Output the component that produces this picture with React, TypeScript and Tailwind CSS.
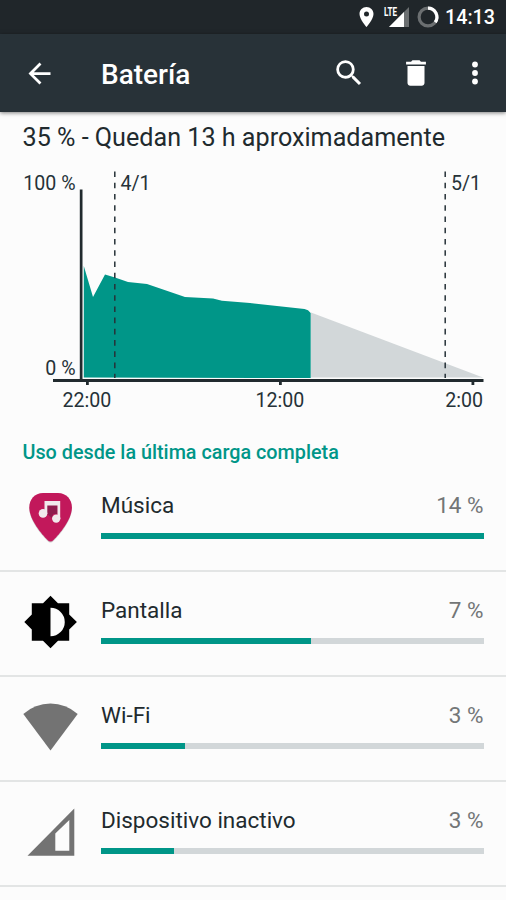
import type { ReactNode } from "react";

function StatusBar() {
  return (
    <div className="flex h-[34px] items-center justify-end bg-[#20262a] pr-[11px] text-white">
      <svg className="h-[34px] w-[86px]" viewBox="356 0 86 34">
        <path
          fillRule="evenodd"
          fill="#fff"
          d="M366.500 7c-3.900 0-7 3.100-7 7 0 5.200 7 13 7 13s7-7.800 7-13c0-3.900-3.100-7-7-7zm0 9.500a2.500 2.500 0 1 1 0-5 2.500 2.500 0 0 1 0 5z"
        />
        <path fill="#6b6f71" d="M409 7v20h-20z" />
        <path fill="#fff" d="M404 12v15h-15z" />
        <path fill="#20262a" d="M383 6h15v8l-4 4h-11z" />
        <text x="384" y="16" fill="#fff" fontSize="12.800" fontWeight="700" textLength="13" lengthAdjust="spacingAndGlyphs">
          LTE
        </text>
        <circle cx="428" cy="17" r="8.900" fill="none" stroke="#6b6f71" strokeWidth="3.200" />
        <path d="M428 8.100a8.900 8.900 0 0 1 7.200 14.130" fill="none" stroke="#fff" strokeWidth="3.200" />
      </svg>
      <span className="ml-[3px] mt-[2px] text-[19.7px] font-medium leading-none">14:13</span>
    </div>
  );
}

function AppBar() {
  return (
    <header className="relative flex h-[78px] items-center bg-[#283238] text-white shadow-[0_1px_4px_rgba(0,0,0,0.5)]">
      <svg className="ml-[23px] h-[33px] w-[33px]" viewBox="0 0 24 24" fill="#fff">
        <path d="M20 11H7.830l5.590-5.590L12 4l-8 8 8 8 1.410-1.410L7.830 13H20v-2z" />
      </svg>
      <h1 className="ml-[45px] mt-[4px] text-[28px] font-medium leading-none">Batería</h1>
      <div className="grow" />
      <svg className="h-[34px] w-[34px]" viewBox="0 0 24 24" fill="#fff">
        <path d="M15.500 14h-.79l-.28-.27A6.471 6.471 0 0 0 16 9.500 6.500 6.500 0 1 0 9.500 16c1.610 0 3.090-.59 4.230-1.570l.27.28v.79l5 4.990L20.490 19l-4.990-5zm-6 0C7.010 14 5 11.990 5 9.500S7.010 5 9.500 5 14 7.010 14 9.500 11.990 14 9.500 14z" />
      </svg>
      <svg className="ml-[33px] h-[34px] w-[34px]" viewBox="0 0 24 24" fill="#fff">
        <path d="M6 19c0 1.100.9 2 2 2h8c1.100 0 2-.9 2-2V7H6v12zM19 4h-3.500l-1-1h-5l-1 1H5v2h14V4z" />
      </svg>
      <svg className="ml-[25px] mr-[14px] h-[34px] w-[34px]" viewBox="0 0 24 24" fill="#fff">
        <circle cx="12" cy="6" r="2.050" />
        <circle cx="12" cy="12" r="2.050" />
        <circle cx="12" cy="18" r="2.050" />
      </svg>
    </header>
  );
}

function Chart() {
  return (
    <svg className="block h-[260px] w-[506px]" viewBox="0 160 506 260" fill="#263238" fontSize="19.600">
      <path
        fill="#009688"
        d="M83.800 377.600V266l9.200 31 12-22.500 10 3 13 4.500 19 2 38 13 28 1.500 9 2.300 28 2.200 54.500 6.100 3.500 1.200 2.700 2.700v65.100z"
      />
      <path fill="#d2d7d9" d="M311 312.500l172 65.100H311z" />
      <path fill="#212a2e" d="M79.800 189.500h2.700V379h401v3H53v-3h26.800z" />
      <path fill="#212a2e" d="M86 381h2.800v4H86zM279 381h2.800v4H279zM471.500 381h2.800v4h-2.800z" />
      <g stroke="#263238" strokeWidth="1.500" strokeDasharray="5.620 5.620">
        <path d="M114.800 171.500V378" />
        <path d="M445.200 171.500V378" />
      </g>
      <text x="75.500" y="189.500" textAnchor="end">100 %</text>
      <text x="75.500" y="375" textAnchor="end">0 %</text>
      <text x="120.500" y="189.500">4/1</text>
      <text x="451" y="189.500">5/1</text>
      <text x="87" y="407" textAnchor="middle">22:00</text>
      <text x="280" y="407" textAnchor="middle">12:00</text>
      <text x="483" y="407" textAnchor="end">2:00</text>
    </svg>
  );
}

function MusicIcon() {
  return (
    <svg className="h-[56px] w-[56px]" viewBox="22 489 56 56">
      <path
        fill="#9e9e9e"
        opacity="0.5"
        transform="translate(0 1)"
        d="M43 493h15c8.500 0 13.900 6.500 13.900 14.500 0 12-12.400 26.500-18.400 32.500-2 2-4 2-6 0-6-6-18.200-20.500-18.200-32.500 0-8 5.200-14.500 13.700-14.500z"
      />
      <path
        fill="#c2185b"
        d="M43 493h15c8.500 0 13.900 6.500 13.900 14.500 0 12-12.400 26.500-18.400 32.500-2 2-4 2-6 0-6-6-18.200-20.500-18.200-32.500 0-8 5.200-14.500 13.700-14.500z"
      />
      <path fill="#8f1b4d" d="M47 505h10.500v9H53l-1 4-5-4z" />
      <path fill="#f1e9ec" d="M44.500 501H60.200v18h-2.700v-13.500H47.300V514h-2.800z" />
      <circle cx="43" cy="513.400" r="4.300" fill="#f1e9ec" />
      <circle cx="56.200" cy="518.600" r="4.200" fill="#f1e9ec" />
    </svg>
  );
}

function DisplayIcon() {
  return (
    <svg className="h-[56px] w-[56px]" viewBox="22 594 56 56">
      <path
        d="M50.500 595.800l7.500 7.500h11.200v11.200l7.700 7.500-7.700 7.500v11.200H58l-7.500 7.500-7.500-7.500H31.800v-11.200l-7.500-7.500 7.500-7.500v-11.200H43z"
        fill="#000"
      />
      <path d="M50.500 607.700a14.300 14.300 0 0 1 0 28.600z" fill="#fcfcfc" />
    </svg>
  );
}

function WifiIcon() {
  return (
    <svg className="h-[56px] w-[56px]" viewBox="22 699 56 56">
      <path d="M50.500 750.500L23.300 714q11.700-10.500 27.200-10.500T77.700 714z" fill="#737373" />
    </svg>
  );
}

function CellIcon() {
  return (
    <svg className="h-[56px] w-[56px]" viewBox="22 804 56 56">
      <path fillRule="evenodd" d="M74.300 808.500v47.200H27.500zM69.300 820L55.300 833.500v17.300h14z" fill="#737373" />
    </svg>
  );
}

interface UsageRowProps {
  icon: ReactNode;
  name: string;
  percent: string;
  fill: number;
}

function UsageRow({ icon, name, percent, fill }: UsageRowProps) {
  return (
    <li className="flex h-[105px] border-b-2 border-[#e3e5e5] pl-[22px] pr-[22.5px]">
      <div className="mt-[22px] shrink-0">{icon}</div>
      <div className="ml-[23px] grow">
        <div className="mt-[25px] flex h-[27px] items-center justify-between text-[22.5px] leading-[27px]">
          <span className="text-[#212a2e]">{name}</span>
          <span className="text-[#737677]">{percent}</span>
        </div>
        <div className="mt-[14px] h-[6px] bg-[#d2d7d9]">
          <div className="h-full bg-[#009688]" style={{ width: fill + "px" }} />
        </div>
      </div>
    </li>
  );
}

export default function App() {
  return (
    <div className="h-[900px] w-[506px] overflow-hidden bg-[#fcfcfc] font-['Roboto',sans-serif]">
      <StatusBar />
      <AppBar />
      <main>
        <h2 className="h-[48px] pl-[22.5px] pt-[11px] text-[25.15px] leading-[30px] text-[#212a2e]">
          35 % - Quedan 13 h aproximadamente
        </h2>
        <Chart />
        <h3 className="h-[47px] pl-[22.5px] pt-[21px] text-[19.8px] font-medium leading-[24px] text-[#009688]">
          Uso desde la última carga completa
        </h3>
        <ul>
          <UsageRow icon={<MusicIcon />} name="Música" percent="14 %" fill={382.5} />
          <UsageRow icon={<DisplayIcon />} name="Pantalla" percent="7 %" fill={210} />
          <UsageRow icon={<WifiIcon />} name="Wi-Fi" percent="3 %" fill={84} />
          <UsageRow icon={<CellIcon />} name="Dispositivo inactivo" percent="3 %" fill={73} />
        </ul>
      </main>
    </div>
  );
}
